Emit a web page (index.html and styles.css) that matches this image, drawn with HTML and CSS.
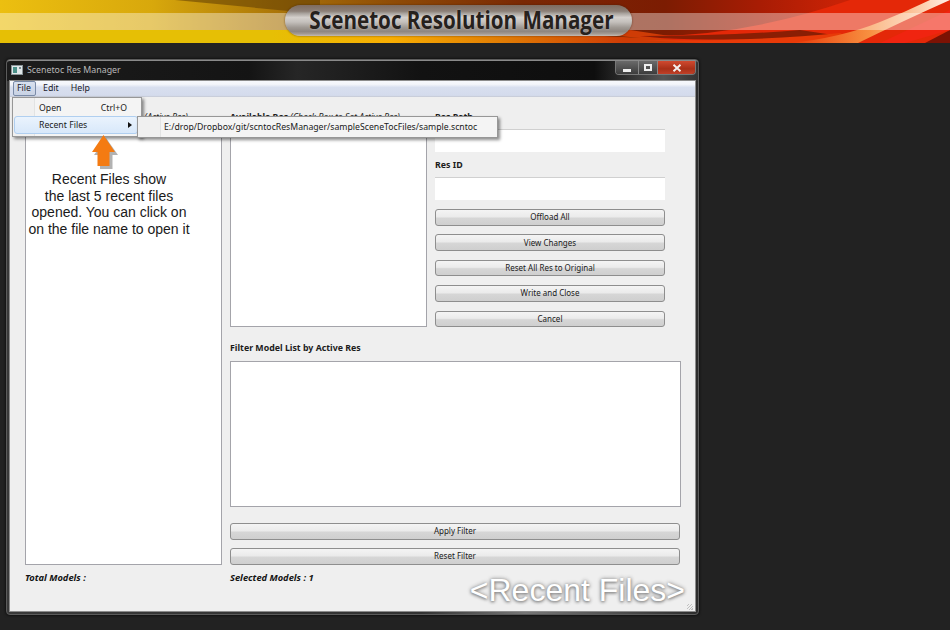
FILE: index.html
```html
<!DOCTYPE html>
<html lang="en">
<head>
<meta charset="utf-8">
<title>Scenetoc Resolution Manager</title>
<link rel="stylesheet" href="styles.css">
</head>
<body>
<header class="banner">
  <svg class="banner-art" width="950" height="43" viewBox="0 0 950 43" aria-hidden="true">
    <defs>
      <linearGradient id="base" x1="0" x2="1" y1="0" y2="0">
        <stop offset="0" stop-color="#ecbf10"/>
        <stop offset="0.16" stop-color="#d8a80c"/>
        <stop offset="0.30" stop-color="#a87208"/>
        <stop offset="0.42" stop-color="#8e4a06"/>
        <stop offset="0.55" stop-color="#7a2804"/>
        <stop offset="0.70" stop-color="#7c1c02"/>
        <stop offset="0.80" stop-color="#a81c04"/>
        <stop offset="0.88" stop-color="#c82206"/>
        <stop offset="1" stop-color="#d82006"/>
      </linearGradient>
      <linearGradient id="glow" x1="0" x2="1" y1="0" y2="0">
        <stop offset="0" stop-color="#e83808"/>
        <stop offset="0.5" stop-color="#f89040"/>
        <stop offset="1" stop-color="#fff0e8"/>
      </linearGradient>
      <linearGradient id="under" x1="0" x2="1" y1="0" y2="0">
        <stop offset="0" stop-color="#e6bf05"/>
        <stop offset="0.35" stop-color="#e6bf05"/>
        <stop offset="0.5" stop-color="#f8ae02"/>
        <stop offset="0.65" stop-color="#e07a04"/>
        <stop offset="0.8" stop-color="#cf3c06"/>
        <stop offset="1" stop-color="#cf3c06"/>
      </linearGradient>
    </defs>
    <rect width="950" height="43" fill="url(#base)"/>
    <path d="M175 0 L320 14 L320 0Z" fill="#5e3c04" opacity=".55"/>
    <path d="M0 30 L0 43 L780 43 Q700 42 630 30Z" fill="url(#under)"/>
    <path d="M500 30 L640 38 L560 30Z" fill="#7c2a04"/>
    <path d="M640 36 Q740 38 850 0 L950 0 L950 43 L700 43Z" fill="#e42808"/>
    <path d="M640 36 Q730 36 800 30 L840 36 Q740 42 660 38Z" fill="#8a1e04"/>
    <path d="M640 40 Q750 42 840 33 L860 43 L700 43Z" fill="#e83a08"/>
    <path d="M790 43 Q840 38 880 22 Q905 12 930 0 L950 0 Q905 20 858 43Z" fill="url(#glow)"/>
    <path d="M925 43 L950 30 L950 43Z" fill="#7c1204"/>
    <path d="M880 43 L950 10 L950 30 L905 43Z" fill="#f02410"/>
    <rect y="13" width="950" height="17" fill="#fff" opacity=".38"/>
  </svg>
  <div class="banner-pill"><span class="banner-title">Scenetoc Resolution Manager</span></div>
</header>

<main class="window">
  <div class="titlebar">
    <svg class="app-icon" width="12" height="10" viewBox="0 0 12 10" aria-hidden="true">
      <rect x=".5" y=".5" width="11" height="9" fill="#e0e8ea" stroke="#8a9498"/>
      <rect x="2" y="2" width="4" height="6" fill="#4a9088"/>
      <rect x="8" y="2" width="2" height="2" fill="#7a8a90"/>
    </svg>
    <span class="window-title">Scenetoc Res Manager</span>
    <div class="controls">
      <span class="ctl ctl-min"><i class="glyph-min"></i></span>
      <span class="ctl ctl-max"><i class="glyph-max"></i></span>
      <span class="ctl ctl-close">
        <svg width="10" height="8" viewBox="0 0 10 8" aria-hidden="true"><path d="M1.500 .8 L8.500 7.200 M8.500 .8 L1.500 7.200" stroke="#f4f0ee" stroke-width="2"/></svg>
      </span>
    </div>
  </div>

  <div class="client">
    <nav class="menubar">
      <span class="menu-item menu-active">File</span>
      <span class="menu-item">Edit</span>
      <span class="menu-item">Help</span>
    </nav>

    <div class="content">
      <section class="left-col">
        <div class="label label-model">Model List <em>(Active Res)</em></div>
        <div class="listbox left-list"></div>
        <div class="status">Total Models :</div>
      </section>

      <section class="right-col">
        <div class="top-row">
          <div class="mid-col">
            <div class="label">Available Res <em>(Check Box to Set Active Res)</em></div>
            <div class="listbox mid-list"></div>
          </div>
          <div class="form-col">
            <div class="label">Res Path</div>
            <div class="field"></div>
            <div class="label label-id">Res ID</div>
            <div class="field"></div>
            <div class="actions">
              <button class="btn">Offload All</button>
              <button class="btn">View Changes</button>
              <button class="btn">Reset All Res to Original</button>
              <button class="btn">Write and Close</button>
              <button class="btn">Cancel</button>
            </div>
          </div>
        </div>
        <div class="label label-filter">Filter Model List by Active Res</div>
        <div class="listbox filter-list"></div>
        <div class="filter-actions">
          <button class="btn">Apply Filter</button>
          <button class="btn">Reset Filter</button>
        </div>
        <div class="status">Selected Models : 1</div>
      </section>

      <div class="callout">
        <svg class="callout-arrow" width="30" height="36" viewBox="0 0 30 36" aria-hidden="true">
          <path d="M13 0 L25 17 L19.500 17 L19.500 31 L7 31 L7 17 L1 17Z" fill="#000" opacity=".3" transform="translate(2 3)"/>
          <path d="M12.500 0 L24 17 L18.500 17 L18.500 31 L6.500 31 L6.500 17 L1 17Z" fill="#f47b12"/>
        </svg>
        <p class="callout-text">Recent Files show<br>the last 5 recent files<br>opened. You can click on<br>on the file name to open it</p>
      </div>

      <div class="stamp">&lt;Recent Files&gt;</div>
      <div class="grip"></div>
    </div>

    <div class="dropdown">
      <div class="drop-row drop-open"><span>Open</span><span>Ctrl+O</span></div>
      <div class="drop-row drop-hot"><span>Recent Files</span><i class="caret"></i></div>
    </div>
    <div class="submenu">E:/drop/Dropbox/git/scntocResManager/sampleSceneTocFiles/sample.scntoc</div>
  </div>
</main>
</body>
</html>
```
FILE: styles.css
```css
* { box-sizing: border-box; }
html, body { margin: 0; height: 100%; }
body {
  background: #222222;
  font-family: "Noto Sans", "Liberation Sans", sans-serif;
  overflow: hidden;
}
.banner {
  position: relative;
  height: 43px;
  overflow: hidden;
}
.banner-art { position: absolute; left: 0; top: 0; }
.banner-pill {
  position: absolute;
  left: 285px;
  top: 5px;
  width: 347px;
  height: 31px;
  border-radius: 16px;
  display: flex;
  align-items: center;
  justify-content: center;
  padding: 0 0 4px 6px;
  background: linear-gradient(#7e6c60 0%, #8c8078 20%, #a8a29c 27%, #d4d0cc 40%, #c4c0bc 55%, #a09a94 72%, #8e8680 85%, #a39a92 93%, #c4bcb4 100%);
  box-shadow: 0 0 2px rgba(60, 30, 10, .7);
}
.banner-title {
  font-family: "Open Sans", sans-serif;
  font-weight: 700;
  font-size: 25px;
  line-height: 30px;
  color: #26211d;
  white-space: nowrap;
  transform: scaleX(.825);
  text-shadow: 0 0 2px rgba(255, 255, 255, .4);
}

.window {
  position: relative;
  width: 693px;
  height: 556px;
  margin: 16px 0 0 6px;
  padding: 0 3px 3px;
  border: 1px solid #5c5c5c;
  border-radius: 4px;
  background: linear-gradient(90deg, #3a3a3a, #333 60%, #777 75%, #2c2c2c 100%);
  box-shadow: 0 0 3px #000;
  display: flex;
  flex-direction: column;
}
.titlebar {
  height: 21px;
  flex: none;
  margin: 0 -3px;
  padding: 0 2px 0 4px;
  display: flex;
  align-items: center;
  gap: 4px;
  background: linear-gradient(90deg, #1c1c1c 0%, #141414 35%, #262626 42%, #121212 60%, #0e0e0e 85%, #555 95%, #333 100%);
  border-top: 1px solid #8a8a8a;
  border-radius: 3px 3px 0 0;
}
.app-icon { margin-top: -3px; }
.window-title {
  font-size: 8.800px;
  color: #b9b9b9;
  line-height: 12px;
  margin-top: -3px;
}
.controls {
  margin-left: auto;
  align-self: flex-start;
  display: flex;
  height: 14px;
  border: 1px solid #777;
  border-top: 0;
  border-radius: 0 0 4px 4px;
  overflow: hidden;
}
.ctl {
  display: flex;
  align-items: center;
  justify-content: center;
  background: linear-gradient(#6a6a6a, #3c3c3c);
  border-right: 1px solid #888;
}
.ctl-min { width: 23px; }
.ctl-max { width: 19px; }
.ctl-close { width: 37px; border-right: 0; background: linear-gradient(#d04a30, #a83018 60%, #c04028); }
.glyph-min { width: 8px; height: 3px; background: #eee; margin-top: 6px; }
.glyph-max { width: 8px; height: 7px; border: 2px solid #eee; }

.client {
  position: relative;
  flex: 1;
  display: flex;
  flex-direction: column;
  background: #efefef;
  box-shadow: 0 0 0 1px #8c8c8c;
  min-height: 0;
}
.menubar {
  height: 16px;
  flex: none;
  padding-left: 3px;
  display: flex;
  background: linear-gradient(#f6f8fc 0%, #f4f6fb 20%, #d8dfef 40%, #d4dbec 90%, #c4c8d2 100%);
}
.menu-item {
  font-size: 8.800px;
  line-height: 15px;
  color: #1a1a2a;
  padding: 0 6px;
  height: 15px;
}
.menu-active {
  border: 1px solid #7a8ba8;
  border-radius: 2px;
  line-height: 13px;
  padding: 0 3px;
  background: linear-gradient(#d8e0ee, #c8d2e4);
  width: 23px;
  margin-right: 1px;
}

.content {
  position: relative;
  flex: 1;
  min-height: 0;
  padding: 14px 14px 0 15px;
  display: flex;
  gap: 8px;
}
.label {
  font-size: 8.800px;
  font-weight: 700;
  line-height: 12px;
  height: 12px;
  color: #1c1c1c;
  white-space: nowrap;
}
.label em { font-weight: 400; font-style: italic; }
.label-model em { margin-left: 72px; }
.listbox {
  background: #fff;
  border: 1px solid #a4a4aa;
}
.left-col { width: 197px; flex: none; display: flex; flex-direction: column; }
.left-list { height: 440px; margin-top: 2px; }
.status {
  font-size: 9.300px;
  font-weight: 700;
  font-style: italic;
  line-height: 12px;
  color: #141414;
  margin-top: 7px;
}
.right-col { flex: 1; display: flex; flex-direction: column; min-width: 0; }
.top-row { display: flex; gap: 8px; height: 216px; }
.mid-col { width: 197px; flex: none; }
.mid-list { height: 202px; margin-top: 2px; }
.form-col { width: 230px; flex: none; display: flex; flex-direction: column; }
.field {
  height: 23px;
  margin-top: 6px;
  background: #fff;
  border-top: 1px solid #d0d0d0;
}
.label-id { margin-top: 7px; }
.actions {
  flex: 1;
  margin-top: 9px;
  display: flex;
  flex-direction: column;
  justify-content: space-between;
}
.btn {
  display: block;
  width: 100%;
  height: 16.500px;
  padding: 0;
  border: 1px solid #8e8e8e;
  border-radius: 3px;
  background: linear-gradient(#f4f4f4 0%, #ebebeb 45%, #d6d6d6 55%, #cfcfcf 100%);
  font-family: inherit;
  font-size: 8px;
  line-height: 14px;
  color: #1a1a1a;
  white-space: nowrap;
}
.label-filter { margin-top: 15px; }
.filter-list { height: 146px; margin-top: 7px; }
.filter-actions {
  width: 450px;
  margin-top: 16px;
  display: flex;
  flex-direction: column;
  gap: 8.500px;
}

.callout {
  position: absolute;
  z-index: 1;
  left: 15px;
  top: 38px;
  width: 168px;
  display: flex;
  flex-direction: column;
  align-items: center;
}
.callout-arrow { margin-right: 6px; }
.callout-text {
  margin: 0;
  font-family: "Liberation Sans", sans-serif;
  font-size: 14px;
  line-height: 16.700px;
  color: #1a1a1a;
  text-align: center;
  white-space: nowrap;
}
.stamp {
  position: absolute;
  right: 10px;
  bottom: 3px;
  font-family: "Liberation Sans", sans-serif;
  font-size: 32px;
  line-height: 36px;
  color: #fff;
  text-shadow: 0 0 4px #888, 0 1px 3px #777;
  white-space: nowrap;
}
.grip {
  position: absolute;
  right: 2px;
  bottom: 1px;
  width: 6px;
  height: 6px;
  background: repeating-linear-gradient(135deg, transparent 0 1px, #c0c0c0 1px 2px);
}

.dropdown {
  position: absolute;
  left: 2px;
  top: 16px;
  width: 130px;
  height: 40px;
  padding: 1px;
  background: linear-gradient(90deg, #f0f0f0 21px, #e2e3e3 21px, #e2e3e3 22px, #f4f4f4 22px);
  border: 1px solid #979797;
  box-shadow: 2px 2px 3px rgba(0, 0, 0, .45);
}
.drop-row {
  display: flex;
  justify-content: space-between;
  align-items: center;
  height: 18px;
  padding: 0 13px 0 25px;
  font-size: 8.700px;
  color: #1a1a1a;
}
.drop-open { height: 17px; }
.drop-hot {
  padding-right: 5px;
  width: 124px;
  border: 1px solid #b0cff0;
  border-radius: 3px;
  padding-left: 24px;
  background: linear-gradient(#eaf3fd, #d8e8fa);
}
.caret {
  width: 0;
  height: 0;
  border-left: 4px solid #111;
  border-top: 3px solid transparent;
  border-bottom: 3px solid transparent;
}
.submenu {
  position: absolute;
  left: 127px;
  top: 35px;
  width: 361px;
  height: 22px;
  padding-left: 26px;
  font-size: 8.700px;
  line-height: 20px;
  color: #1a1a1a;
  white-space: nowrap;
  background: linear-gradient(90deg, #f0f0f0 22px, #e2e3e3 22px, #e2e3e3 23px, #f4f4f4 23px);
  border: 1px solid #979797;
  box-shadow: 2px 2px 3px rgba(0, 0, 0, .45);
}
```
